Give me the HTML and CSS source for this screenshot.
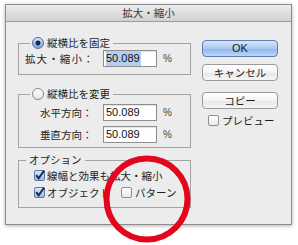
FILE: index.html
```html
<!DOCTYPE html>
<html lang="ja">
<head>
<meta charset="utf-8">
<link rel="stylesheet" href="styles.css">
</head>
<body>
<div class="window">
  <div class="titlebar">拡大・縮小</div>
  <div class="content">
    <div class="left">
      <div class="group g1">
        <div class="legend"><span class="radio on"></span><span>縦横比を固定</span></div>
        <div class="row">
          <span class="label spaced">拡大・縮小：</span>
          <span class="field"><span class="sel">50.089</span></span>
          <span class="pct">%</span>
        </div>
      </div>
      <div class="group g2">
        <div class="legend"><span class="radio"></span><span>縦横比を変更</span></div>
        <div class="row">
          <span class="label">水平方向：</span>
          <span class="field">50.089</span>
          <span class="pct">%</span>
        </div>
        <div class="row">
          <span class="label">垂直方向：</span>
          <span class="field">50.089</span>
          <span class="pct">%</span>
        </div>
      </div>
      <div class="group g3">
        <div class="legend plain">オプション</div>
        <div class="check-row">
          <span class="cb on"><svg viewBox="0 0 11 11" width="11" height="11"><path d="M2.2 5.2 L4.6 8.4 L10.2 0.6" fill="none" stroke="#1c2b4f" stroke-width="2"/></svg></span>
          <span>線幅と効果も拡大・縮小</span>
        </div>
        <div class="check-row">
          <span class="cb on"><svg viewBox="0 0 11 11" width="11" height="11"><path d="M2.2 5.2 L4.6 8.4 L10.2 0.6" fill="none" stroke="#1c2b4f" stroke-width="2"/></svg></span>
          <span>オブジェクト</span>
          <span class="cb second"></span>
          <span>パターン</span>
        </div>
      </div>
    </div>
    <div class="right">
      <button class="btn default">OK</button>
      <button class="btn cancel">キャンセル</button>
      <button class="btn copy">コピー</button>
      <div class="check-row preview">
        <span class="cb"></span>
        <span>プレビュー</span>
      </div>
    </div>
  </div>
</div>
<svg class="mark" width="88" height="88" viewBox="0 0 88 88">
  <circle cx="44" cy="44" r="40.5" fill="none" stroke="#e3061c" stroke-width="6"/>
</svg>
</body>
</html>
```

FILE: styles.css
```css
html, body {
  margin: 0;
  padding: 0;
}
body {
  width: 298px;
  height: 245px;
  overflow: hidden;
  position: relative;
  background: #ffffff;
  font-family: "Noto Sans CJK JP", "Noto Sans", sans-serif;
  font-size: 10.5px;
  color: #1e1e1e;
}
.window {
  margin: 4px 0 0 5px;
  width: 287px;
  height: 221px;
  box-sizing: border-box;
  border: 1px solid #8c8c8c;
  background: #ececec;
  box-shadow: 0 1px 4px rgba(0, 0, 0, 0.3);
  display: flex;
  flex-direction: column;
}
.titlebar {
  height: 16px;
  line-height: 16px;
  border-bottom: 1px solid #9c9c9c;
  background: linear-gradient(#ececec, #d2d2d2);
  text-align: center;
  color: #3a3a3a;
  font-size: 10.5px;
}
.content {
  display: flex;
  padding-left: 12px;
  gap: 11px;
}
.left {
  width: 173px;
  display: flex;
  flex-direction: column;
}
.group {
  border: 1px solid #a3a3a3;
}
.legend {
  display: flex;
  align-items: center;
  gap: 3px;
  width: fit-content;
  height: 14px;
  line-height: 14px;
  margin: -8px 0 0 11px;
  padding: 0 3px 0 2px;
  background: #ececec;
}
.legend.plain {
  margin-left: 7px;
  padding: 0 3px 0 3px;
}
.radio {
  width: 12px;
  height: 12px;
  box-sizing: border-box;
  border-radius: 50%;
  border: 1px solid #8a8a8a;
  background: linear-gradient(#ffffff, #e6e6e6);
}
.radio.on {
  border-color: #4f6ea6;
  background: radial-gradient(circle, #1b2a4d 0 2.2px, transparent 2.8px),
    linear-gradient(#d2e3f7, #7aa6df);
}
.g1 {
  margin-top: 21px;
  padding-bottom: 7px;
}
.g2 {
  margin-top: 19px;
  padding-bottom: 4px;
}
.g3 {
  margin-top: 12px;
  padding-bottom: 6px;
}
.row {
  display: grid;
  grid-template-columns: 78px 54px auto;
  column-gap: 6px;
  align-items: center;
}
.g2 .row {
  margin-top: 3px;
}
.g2 .row + .row {
  margin-top: 5px;
}
.label {
  padding-left: 21px;
  white-space: nowrap;
}
.label.spaced {
  padding-left: 6px;
  letter-spacing: 1.1px;
}
.field {
  height: 17px;
  box-sizing: border-box;
  border: 1px solid #8e8e8e;
  background: #ffffff;
  box-shadow: inset 0 1px 1px rgba(0, 0, 0, 0.12);
  font-family: "Liberation Sans", Arial, sans-serif;
  font-size: 11px;
  line-height: 15px;
  padding-left: 2px;
  color: #111;
}
.sel {
  display: inline-block;
  height: 15px;
  background: #b3cef1;
  padding-right: 1px;
}
.pct {
  font-family: "Liberation Sans", Arial, sans-serif;
  font-size: 10px;
  color: #444;
}
.check-row {
  display: flex;
  align-items: center;
  height: 17px;
  padding-left: 15px;
  white-space: nowrap;
}
.g3 .check-row:first-of-type {
  margin-top: 3px;
}
.cb {
  width: 11px;
  height: 11px;
  box-sizing: border-box;
  border: 1px solid #8f8f8f;
  border-radius: 2px;
  background: linear-gradient(#ffffff, #e8e8e8);
  margin-right: 2px;
  position: relative;
  flex: none;
}
.cb svg {
  position: absolute;
  left: -1px;
  top: -1px;
}
.cb.on {
  border-color: #5a79ad;
  background: linear-gradient(#dbe8f8, #9dbfea);
}
.cb.second {
  margin-left: 11px;
  margin-right: 3px;
}
.right {
  width: 76px;
  display: flex;
  flex-direction: column;
}
.btn {
  display: block;
  width: 76px;
  height: 17px;
  box-sizing: border-box;
  margin: 0;
  padding: 0;
  border: 1px solid #9a9a9a;
  border-radius: 4px;
  background: linear-gradient(#ffffff, #f3f3f3 50%, #e6e6e6 51%, #f6f6f6);
  font-family: "Noto Sans CJK JP", sans-serif;
  font-size: 10.5px;
  line-height: 15px;
  color: #1e1e1e;
  text-align: center;
}
.btn.default {
  margin-top: 18px;
  border-color: #5f7db0;
  background: linear-gradient(#d6e6f9, #aac9f0 50%, #8bb5ea 51%, #bcd8f7);
  font-family: "Liberation Sans", Arial, sans-serif;
  font-size: 11px;
}
.btn.cancel {
  margin-top: 7px;
}
.btn.copy {
  margin-top: 11px;
}
.check-row.preview {
  margin-top: 3px;
  padding-left: 6px;
}
.preview .cb {
  margin-right: 3px;
}
.mark {
  position: absolute;
  left: 103px;
  top: 155px;
}
```
